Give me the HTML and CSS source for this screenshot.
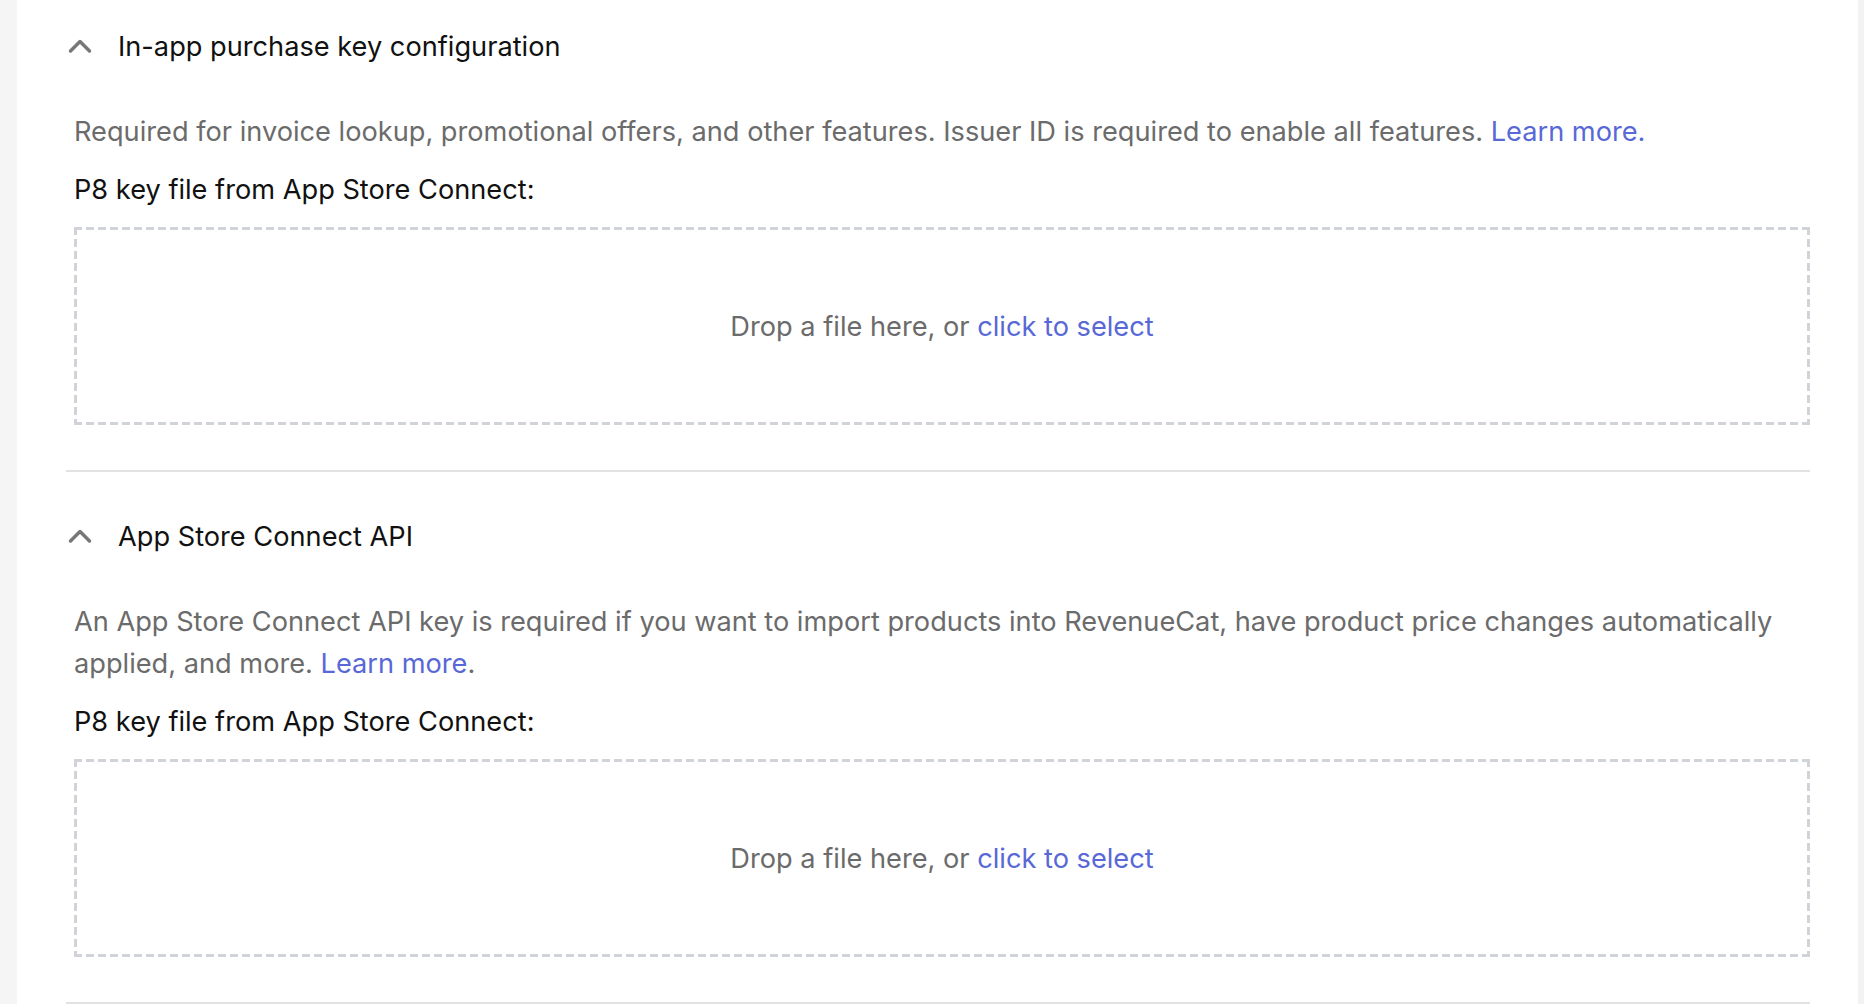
FILE: index.html
```html
<!DOCTYPE html>
<html lang="en">
<head>
<meta charset="utf-8">
<title>App settings</title>
<link rel="stylesheet" href="styles.css">
</head>
<body>
<div class="layout">
  <aside class="rail"></aside>
  <main class="main">
    <section class="section">
      <header class="section-header">
        <span class="chevron"><svg width="24" height="16" viewBox="0 0 24 16"><path d="M2.5 13 L12 3.5 L21.5 13" fill="none" stroke="#777" stroke-width="3.5" stroke-linecap="round" stroke-linejoin="round"/></svg></span>
        <h2 class="section-title">In-app purchase key configuration</h2>
      </header>
      <div class="section-body">
        <p class="desc">Required for invoice lookup, promotional offers, and other features. Issuer ID is required to enable all features. <a class="link" href="#">Learn more.</a></p>
        <p class="label">P8 key file from App Store Connect:</p>
        <div class="dropzone">
          <span class="drop-text">Drop a file here, or <a class="link" href="#">click to select</a></span>
        </div>
      </div>
    </section>
    <section class="section">
      <header class="section-header">
        <span class="chevron"><svg width="24" height="16" viewBox="0 0 24 16"><path d="M2.5 13 L12 3.5 L21.5 13" fill="none" stroke="#777" stroke-width="3.5" stroke-linecap="round" stroke-linejoin="round"/></svg></span>
        <h2 class="section-title">App Store Connect API</h2>
      </header>
      <div class="section-body">
        <p class="desc">An App Store Connect API key is required if you want to import products into RevenueCat, have product price changes automatically applied, and more. <a class="link" href="#">Learn more</a>.</p>
        <p class="label">P8 key file from App Store Connect:</p>
        <div class="dropzone">
          <span class="drop-text">Drop a file here, or <a class="link" href="#">click to select</a></span>
        </div>
      </div>
    </section>
  </main>
  <div class="scroll-rail"></div>
</div>
</body>
</html>
```
FILE: styles.css
```css
* { box-sizing: border-box; }
html, body { margin: 0; padding: 0; }
body {
  background: #f5f5f5;
  font-family: Inter, "Noto Sans", "Liberation Sans", sans-serif;
  color: #111;
  overflow: hidden;
}
.layout {
  display: flex;
  height: 1004px;
}
.rail {
  width: 17px;
  flex: none;
  background: #f5f5f5;
}
.scroll-rail {
  width: 6px;
  flex: none;
  background: #f3f3f3;
}
.main {
  flex: 1;
  background: #ffffff;
  padding: 0 48px 0 49px;
  overflow: hidden;
}
.section {
  padding: 34px 0 45px;
  border-bottom: 2px solid #e2e2e2;
}
.section:first-child {
  padding-top: 16px;
}
.section-header {
  display: flex;
  align-items: center;
  height: 60px;
}
.chevron {
  width: 24px;
  height: 16px;
  display: flex;
  align-items: center;
  margin-left: 2px;
  margin-right: 26px;
}
.chevron svg { display: block; }
.section-title {
  margin: 0;
  font-size: 27.2px;
  font-weight: 400;
  color: #111;
}
.section-body {
  padding-left: 8px;
  margin-top: 35px;
}
.desc {
  margin: 0;
  font-size: 27.2px;
  line-height: 42px;
  color: #6b6b6b;
}
.label {
  margin: 16px 0 0;
  font-size: 27.2px;
  line-height: 42px;
  color: #111;
}
.link {
  color: #5868d6;
  text-decoration: none;
}
.dropzone {
  margin-top: 16px;
  height: 198px;
  display: flex;
  align-items: center;
  justify-content: center;
  background-image:
    linear-gradient(to right, #d0d4d9 8px, transparent 8px),
    linear-gradient(to right, #d0d4d9 8px, transparent 8px),
    linear-gradient(to bottom, #d0d4d9 8px, transparent 8px),
    linear-gradient(to bottom, #d0d4d9 8px, transparent 8px);
  background-size: 12px 3px, 12px 3px, 3px 12px, 3px 12px;
  background-position: 0 0, 0 100%, 0 0, 100% 0;
  background-repeat: repeat-x, repeat-x, repeat-y, repeat-y;
}
.drop-text {
  font-size: 27.2px;
  color: #6b6b6b;
}
```
